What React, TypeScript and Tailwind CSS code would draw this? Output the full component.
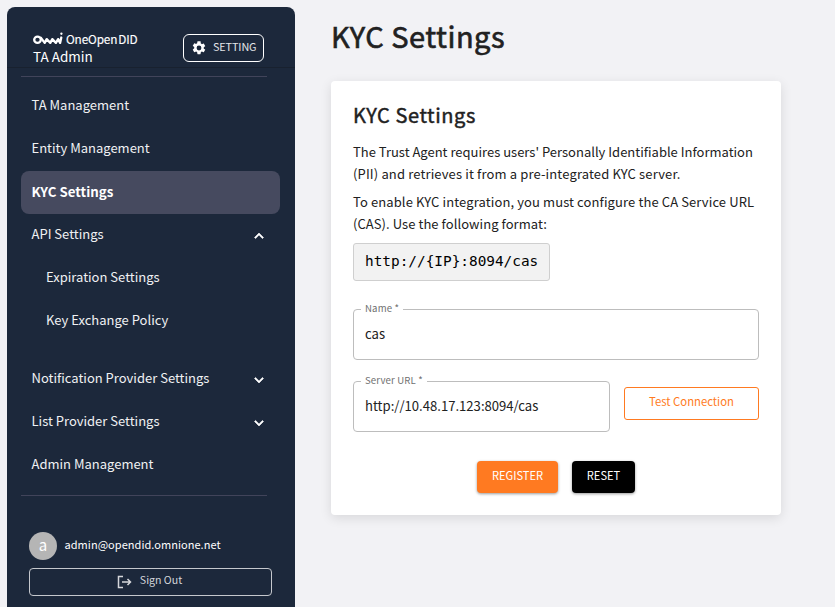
import { ReactNode } from "react";

function Chevron({ up }: { up?: boolean }) {
  return (
    <svg width="18" height="18" viewBox="0 0 24 24" fill="white" stroke="white" strokeWidth="0.8">
      {up ? (
        <path d="M12 8l-6 6 1.41 1.41L12 10.83l4.59 4.58L18 14z" />
      ) : (
        <path d="M16.59 8.59 12 13.17 7.41 8.59 6 10l6 6 6-6z" />
      )}
    </svg>
  );
}

function NavItem({ children, active, child, arrow }: { children: ReactNode; active?: boolean; child?: boolean; arrow?: "up" | "down" }) {
  return (
    <div
      className={`flex h-[43px] items-center justify-between whitespace-nowrap rounded-lg pr-3 leading-5 ${child ? "pl-[25px]" : "pl-[10.5px]"} ${active ? "bg-[#464a5f] text-[13.3px] font-bold text-white" : "text-[13px] text-[#f0f1f3]"}`}
    >
      <span className={active ? "pb-[2px]" : "pb-[4px]"}>{children}</span>
      {arrow && <Chevron up={arrow === "up"} />}
    </div>
  );
}

function Field({ label, value, className }: { label: string; value: string; className: string }) {
  return (
    <div className={`relative flex h-[51px] items-center rounded border border-[#bdbdbd] pl-[11px] text-[13.1px] text-[#212121] ${className}`}>
      <span className="absolute left-[7px] -top-[10.5px] whitespace-nowrap bg-white px-1 text-[9.6px] leading-4 tracking-[0.15px] text-[#707070]">{label}</span>
      <span className="pb-[2px]">{value}</span>
    </div>
  );
}

export default function App() {
  return (
    <div className="flex h-[607px] w-[835px] overflow-hidden bg-[#f2f2f5] pl-[7px] pt-[7px] font-['Noto_Sans_CJK_KR',sans-serif]">
      <aside className="flex h-[600px] w-[288px] shrink-0 flex-col rounded-t-lg bg-[#1c283b] px-[14px] text-white">
        <header className="-mx-[14px] flex h-[61px] justify-between border-b border-[#18212f] pl-[26px] pr-[31px]">
          <div className="pt-[24px]">
            <div className="flex h-4 items-center gap-[3px]">
              <svg width="30" height="14" viewBox="0 0 30 14" fill="none" stroke="white" strokeWidth="2.3" strokeLinecap="round" strokeLinejoin="round">
                <ellipse cx="4.5" cy="7.8" rx="3.3" ry="3.1" />
                <path d="M7.8 5.6l3.9 5.3 2-3.8 3.6 3.8 2-3.8 3.6 3.8 2.2-3.8 2 3.8 1.2-5.4" />
                <path d="M28.4 1.6v.2" />
              </svg>
              <span className="whitespace-nowrap text-[11.8px] leading-4 tracking-[-0.15px] [-webkit-text-stroke:0.15px]">
                OneOpen<span className="ml-px">DID</span>
              </span>
            </div>
            <div className="whitespace-nowrap text-[13.5px] leading-[18px]">TA Admin</div>
          </div>
          <div className="mt-[27px] flex h-7 w-[81px] items-center rounded-[6px] border border-white pl-[6.5px]">
            <svg width="16" height="16" viewBox="0 0 24 24" fill="white">
              <path d="M19.14 12.94c.04-.3.06-.61.06-.94s-.02-.64-.07-.94l2.03-1.58a.49.49 0 0 0 .12-.61l-1.92-3.32a.49.49 0 0 0-.59-.22l-2.39.96a7 7 0 0 0-1.62-.94l-.36-2.54A.48.48 0 0 0 13.92 2h-3.84a.48.48 0 0 0-.47.41l-.36 2.54c-.59.24-1.13.57-1.62.94l-2.39-.96a.48.48 0 0 0-.59.22L2.74 8.47a.48.48 0 0 0 .12.61l2.03 1.58c-.05.3-.09.63-.09.94s.02.64.07.94l-2.03 1.58a.49.49 0 0 0-.12.61l1.92 3.32c.12.22.37.29.59.22l2.39-.96c.5.38 1.03.7 1.62.94l.36 2.54c.05.24.24.41.48.41h3.84c.24 0 .44-.17.47-.41l.36-2.54a7 7 0 0 0 1.62-.94l2.39.96c.22.08.47 0 .59-.22l1.92-3.32a.48.48 0 0 0-.12-.61zM12 15.6a3.6 3.6 0 1 1 0-7.2 3.6 3.6 0 0 1 0 7.2" />
            </svg>
            <span className="ml-[6.5px] pb-[5px] text-[10.8px] leading-4 tracking-[-0.1px] text-[#e3e5e8]">SETTING</span>
          </div>
        </header>
        <div className="mt-2 h-px w-[246px] shrink-0 bg-[#41445a]" />
        <nav className="mt-2 w-[259px]">
          <NavItem>TA Management</NavItem>
          <NavItem>Entity Management</NavItem>
          <NavItem active>KYC Settings</NavItem>
          <NavItem arrow="up">API Settings</NavItem>
          <NavItem child>Expiration Settings</NavItem>
          <NavItem child>Key Exchange Policy</NavItem>
          <div className="mt-[15px]">
            <NavItem arrow="down">Notification Provider Settings</NavItem>
            <NavItem arrow="down">List Provider Settings</NavItem>
            <NavItem>Admin Management</NavItem>
          </div>
        </nav>
        <div className="mt-2 h-px w-[246px] shrink-0 bg-[#41445a]" />
        <div className="ml-2 mt-9 flex h-7 items-center gap-[7.5px]">
          <div className="flex size-7 items-center justify-center rounded-full bg-[#b5b5b5] pb-[3px] text-[15px] leading-5">a</div>
          <span className="whitespace-nowrap pb-[5px] text-[11px] leading-5 tracking-[0.04px]">admin@opendid.omnione.net</span>
        </div>
        <div className="ml-2 mt-2 flex h-7 w-[243px] items-center justify-center gap-2 rounded border border-[#c5c8cd] pr-[2px] text-[#d5d7db]">
          <svg width="15" height="14" viewBox="0 0 15 14" fill="none" stroke="currentColor" strokeWidth="1.5">
            <path d="M6 1.5H1.5v11H6M5 7h8.5M10.5 4l3 3-3 3" />
          </svg>
          <span className="pb-[4px] text-[10.6px] leading-4">Sign Out</span>
        </div>
      </aside>
      <main className="ml-9 w-[450px] text-[#212121]">
        <h1 className="mt-[8px] whitespace-nowrap text-[29px] leading-[40px] tracking-[0.5px] [-webkit-text-stroke:0.6px]">KYC Settings</h1>
        <section className="mt-[26px] h-[434px] rounded bg-white px-[22px] pt-[19px] shadow-[0_3px_12px_rgba(0,0,0,0.11)]">
          <h2 className="whitespace-nowrap text-[20px] leading-[30px] tracking-[0.58px] [-webkit-text-stroke:0.45px]">KYC Settings</h2>
          <p className="mt-[11px] whitespace-nowrap text-[13px] leading-[22px]">
            The Trust Agent requires users' Personally Identifiable Information
            <br />
            <span className="tracking-[0.14px]">(PII) and retrieves it from a pre-integrated KYC server.</span>
          </p>
          <p className="mt-[6px] whitespace-nowrap text-[13px] leading-[22px] tracking-[0.11px]">
            To enable KYC integration, you must configure the CA Service URL
            <br />
            <span className="tracking-[0.06px]">(CAS). Use the following format:</span>
          </p>
          <div className="mt-[8px] flex h-[38px] w-[197px] items-center rounded-[3px] border border-[#cfcfcf] bg-[#f2f2f2] pl-[11px] font-['DejaVu_Sans_Mono',monospace] text-[14.4px] text-black">
            http://&#123;IP&#125;:8094/cas
          </div>
          <Field label="Name *" value="cas" className="mt-[28px] w-[406px]" />
          <div className="mt-[21px] flex gap-[14px]">
            <Field label="Server URL *" value="http://10.48.17.123:8094/cas" className="w-[257px]" />
            <button className="mt-[6px] h-[33px] w-[135px] rounded-[3px] border border-[#ff7a21] pb-[5px] text-[11.3px] leading-5 text-[#ff7a21]">Test Connection</button>
          </div>
          <div className="mt-[29px] flex justify-center gap-[14px] text-[11.1px] text-white">
            <button className="h-8 w-[81px] rounded bg-[#ff7a21] pb-[4px] leading-5 shadow-[0_1px_3px_rgba(0,0,0,0.4)]">REGISTER</button>
            <button className="h-8 w-[63px] rounded bg-black pb-[4px] leading-5 shadow-[0_1px_3px_rgba(0,0,0,0.4)]">RESET</button>
          </div>
        </section>
      </main>
    </div>
  );
}
